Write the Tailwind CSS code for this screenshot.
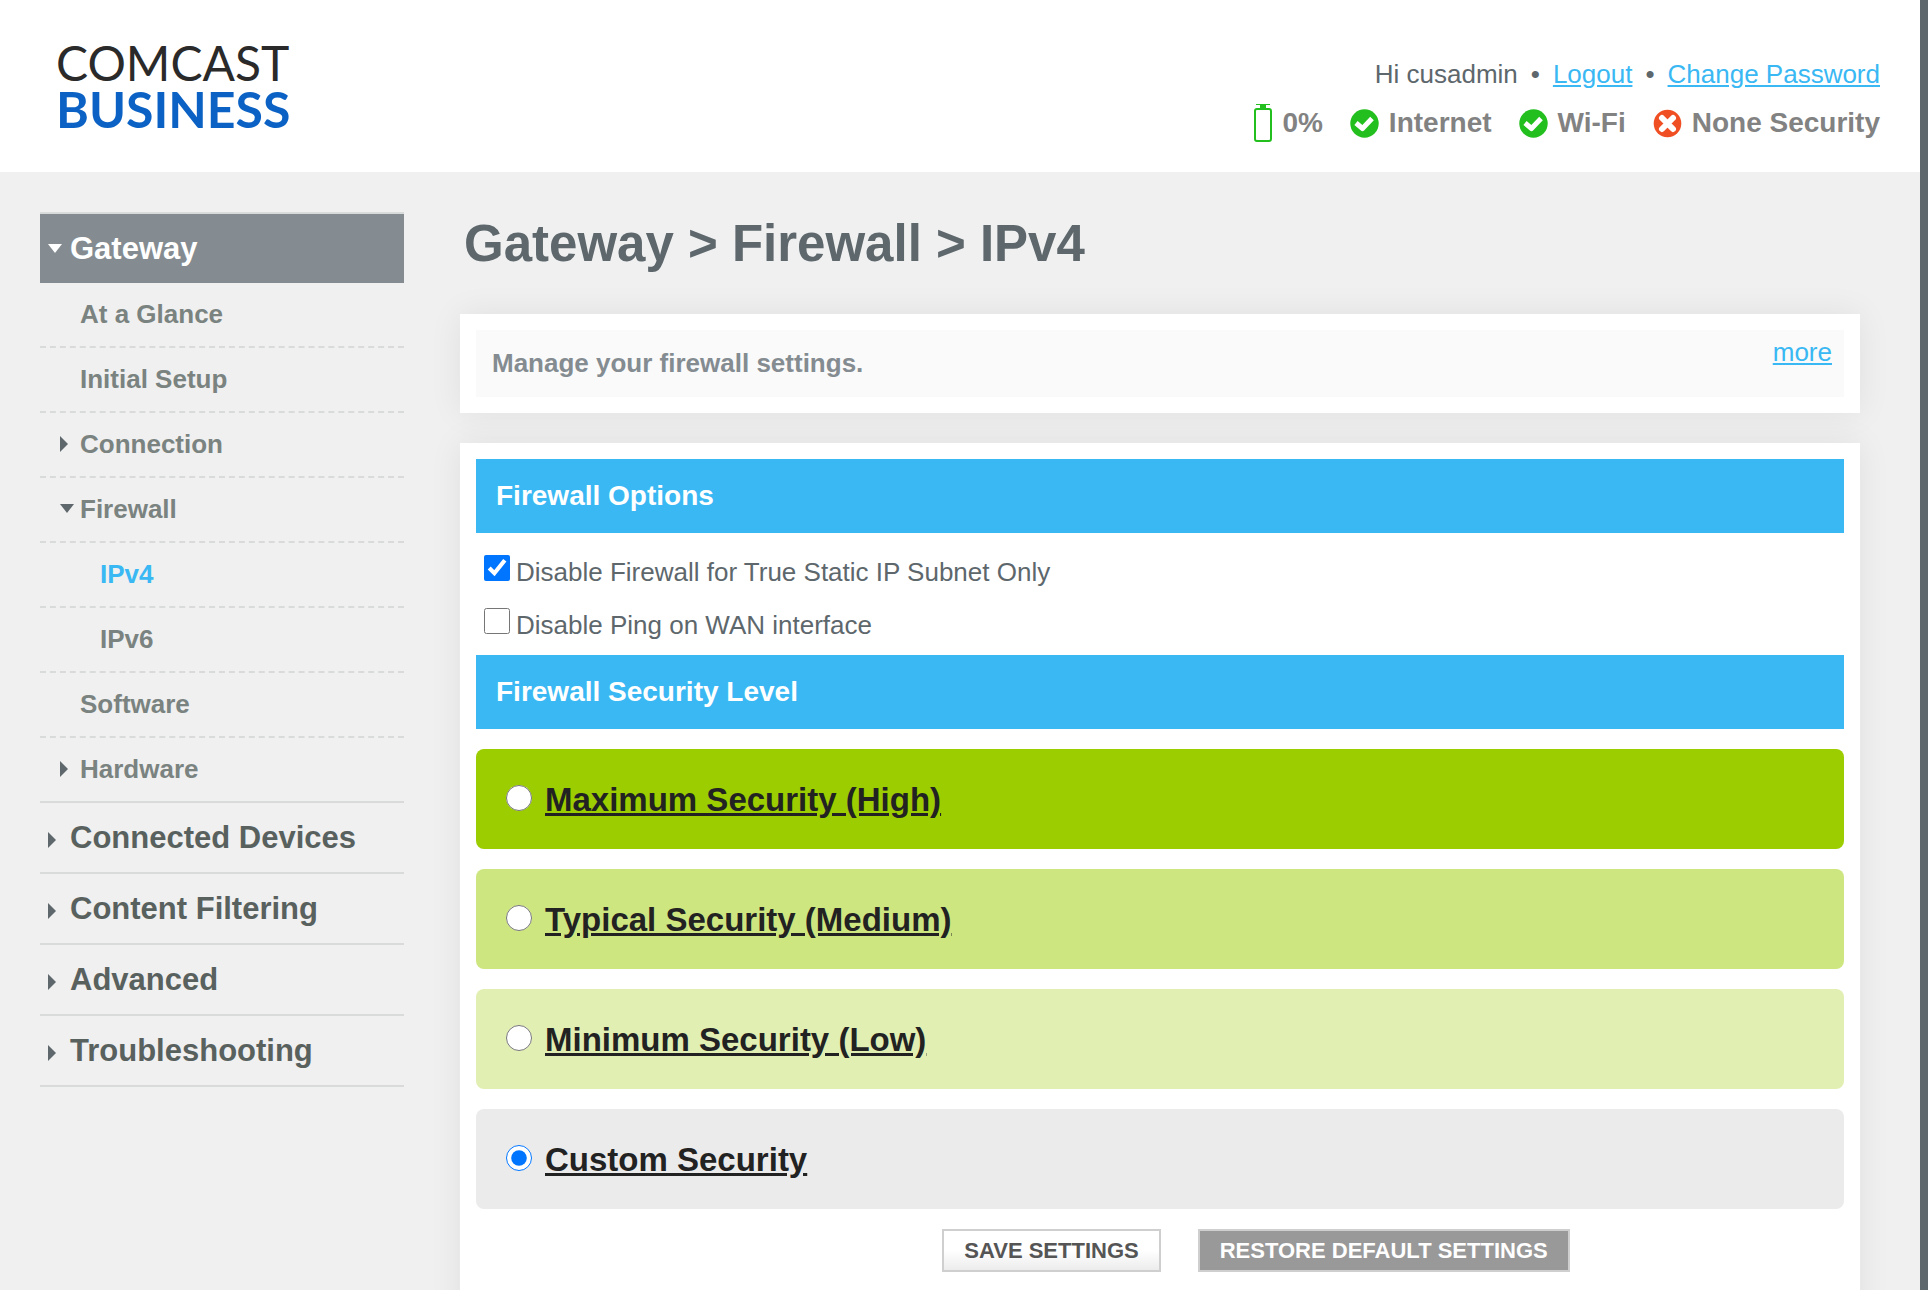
<!DOCTYPE html>
<html lang="en">
<head>
<meta charset="utf-8">
<title>Gateway &gt; Firewall &gt; IPv4</title>
<script src="https://cdn.jsdelivr.net/npm/@tailwindcss/browser@4"></script>
</head>
<body class="bg-[#5d676c] pr-2 font-['Liberation_Sans',Arial,sans-serif] text-[26px] leading-[30px] text-[#5d676c]">
<div class="min-h-screen bg-[#f0f0f0]">

  <header class="flex h-[172px] items-start justify-between bg-white pl-14 pr-10">
    <a href="#" aria-label="Comcast Business" class="flex flex-col pt-[39px] font-['Lato',sans-serif]">
      <span class="h-[47px] text-5xl leading-[47px] text-[#2a2a2a]">COMCAST</span>
      <span class="h-[47px] text-[50px] font-bold leading-[47px] text-[#0c62c4]">BUSINESS</span>
    </a>
    <div class="flex flex-col items-end gap-[18px] pt-[59px]">
      <div class="flex gap-[13px]">
        <span>Hi cusadmin</span><span>•</span>
        <a href="#" class="text-[#39b8f3] underline">Logout</a><span>•</span>
        <a href="#" class="text-[#39b8f3] underline">Change Password</a>
      </div>
      <ul class="flex items-center gap-[27px] text-[28px] font-bold leading-8 text-[#828282]">
        <li class="flex items-center gap-[10px]">
          <svg class="-my-1 h-[38px] w-[18px]" viewBox="0 0 18 38" fill="none"><path d="M2 0h14v1h-4v4H6V1H2z" fill="#23bf1f"/><rect x="1" y="5" width="16" height="32" rx="2" stroke="#23bf1f" stroke-width="2"/></svg>
          0%
        </li>
        <li class="flex items-center gap-[10px]">
          <svg class="size-[29px]" viewBox="0 0 29 29" fill="none"><circle cx="14.500" cy="14.500" r="14.200" fill="#23bf1f"/><path d="M6 14l6.500 5.500L22 9.500" stroke="#fff" stroke-width="5" stroke-linejoin="round"/></svg>
          Internet
        </li>
        <li class="flex items-center gap-[10px]">
          <svg class="size-[29px]" viewBox="0 0 29 29" fill="none"><circle cx="14.500" cy="14.500" r="14.200" fill="#23bf1f"/><path d="M6 14l6.500 5.500L22 9.500" stroke="#fff" stroke-width="5" stroke-linejoin="round"/></svg>
          Wi-Fi
        </li>
        <li class="flex items-center gap-[10px]">
          <svg class="size-[29px]" viewBox="0 0 29 29" fill="none"><circle cx="14.500" cy="14.500" r="13.800" fill="#f04e23"/><path d="M9 9l11 11M20 9L9 20" stroke="#fff" stroke-width="6" stroke-linecap="round"/></svg>
          None Security
        </li>
      </ul>
    </div>
  </header>

  <div class="flex items-start gap-14 pl-10 pr-[60px] pt-10">
    <nav class="w-[364px] shrink-0 border-t-2 border-[#d9dada] font-bold text-[#7a8380]">
      <a href="#" class="flex h-[69px] items-center gap-2 bg-[#848c91] pl-2 text-[31px] text-white">
        <svg class="h-[9px] w-[14px]" viewBox="0 0 14 9"><path d="M0 0h14L7 9z" fill="currentColor"/></svg>Gateway</a>
      <a href="#" class="flex h-[65px] items-center border-b-2 border-dashed border-[#d9dada] pb-0.5 pl-10">At a Glance</a>
      <a href="#" class="flex h-[65px] items-center border-b-2 border-dashed border-[#d9dada] pb-0.5 pl-10">Initial Setup</a>
      <a href="#" class="flex h-[65px] items-center gap-3 border-b-2 border-dashed border-[#d9dada] pb-0.5 pl-5">
        <svg class="h-4 w-2" viewBox="0 0 8 16"><path d="M0 0v16l8-8z" fill="#5d676c"/></svg>Connection</a>
      <a href="#" class="flex h-[65px] items-center gap-[6px] border-b-2 border-dashed border-[#d9dada] pb-0.5 pl-5">
        <svg class="h-[9px] w-[14px]" viewBox="0 0 14 9"><path d="M0 0h14L7 9z" fill="#5d676c"/></svg>Firewall</a>
      <a href="#" aria-current="page" class="flex h-[65px] items-center border-b-2 border-dashed border-[#d9dada] pb-0.5 pl-[60px] text-[#39b8f3]">IPv4</a>
      <a href="#" class="flex h-[65px] items-center border-b-2 border-dashed border-[#d9dada] pb-0.5 pl-[60px]">IPv6</a>
      <a href="#" class="flex h-[65px] items-center border-b-2 border-dashed border-[#d9dada] pb-0.5 pl-10">Software</a>
      <a href="#" class="flex h-[65px] items-center gap-3 border-b-2 border-[#d9dada] pb-0.5 pl-5">
        <svg class="h-4 w-2" viewBox="0 0 8 16"><path d="M0 0v16l8-8z" fill="#5d676c"/></svg>Hardware</a>
      <a href="#" class="flex h-[71px] items-center gap-[14px] border-b-2 border-[#d9dada] pl-2 text-[31px] text-[#59615f]">
        <svg class="mt-1 h-4 w-2" viewBox="0 0 8 16"><path d="M0 0v16l8-8z" fill="#5d676c"/></svg>Connected Devices</a>
      <a href="#" class="flex h-[71px] items-center gap-[14px] border-b-2 border-[#d9dada] pl-2 text-[31px] text-[#59615f]">
        <svg class="mt-1 h-4 w-2" viewBox="0 0 8 16"><path d="M0 0v16l8-8z" fill="#5d676c"/></svg>Content Filtering</a>
      <a href="#" class="flex h-[71px] items-center gap-[14px] border-b-2 border-[#d9dada] pl-2 text-[31px] text-[#59615f]">
        <svg class="mt-1 h-4 w-2" viewBox="0 0 8 16"><path d="M0 0v16l8-8z" fill="#5d676c"/></svg>Advanced</a>
      <a href="#" class="flex h-[71px] items-center gap-[14px] border-b-2 border-[#d9dada] pl-2 text-[31px] text-[#59615f]">
        <svg class="mt-1 h-4 w-2" viewBox="0 0 8 16"><path d="M0 0v16l8-8z" fill="#5d676c"/></svg>Troubleshooting</a>
    </nav>

    <main class="min-w-0 flex-1">
      <h1 class="h-[102px] pl-1 text-[51px] font-bold leading-[64px]">Gateway &gt; Firewall &gt; IPv4</h1>

      <section class="bg-white p-4 shadow-[0_0_32px_rgba(0,0,0,0.07)]">
        <div class="flex h-[67px] items-start justify-between bg-[#fafafa] pl-4 pr-3">
          <p class="pt-[18px] font-bold text-[#848c91]">Manage your firewall settings.</p>
          <a href="#" class="pt-[7px] text-[#39b8f3] underline">more</a>
        </div>
      </section>

      <form class="mt-[30px] bg-white p-4 shadow-[0_0_32px_rgba(0,0,0,0.07)]">
        <h2 class="bg-[#39b8f3] px-5 py-5 text-[28px] font-bold leading-[34px] text-white">Firewall Options</h2>
        <div class="flex flex-col gap-[23px] pb-[15px] pl-2 pt-6">
          <label class="flex h-[30px] gap-[6px]"><input type="checkbox" checked class="-mt-0.5 size-[26px]"><span>Disable Firewall for True Static IP Subnet Only</span></label>
          <label class="flex h-[30px] gap-[6px]"><input type="checkbox" class="-mt-0.5 size-[26px]"><span>Disable Ping on WAN interface</span></label>
        </div>
        <h2 class="bg-[#39b8f3] px-5 py-5 text-[28px] font-bold leading-[34px] text-white">Firewall Security Level</h2>
        <div class="flex flex-col gap-5 pt-5 text-[33px] font-bold leading-[38px] text-[#222] underline">
          <label class="flex h-[100px] items-center gap-[13px] rounded-lg bg-[#9ccd00] pl-[30px] pt-0.5"><input type="radio" name="level" class="-mt-1 size-[26px]">Maximum Security (High)</label>
          <label class="flex h-[100px] items-center gap-[13px] rounded-lg bg-[#cee680] pl-[30px] pt-0.5"><input type="radio" name="level" class="-mt-1 size-[26px]">Typical Security (Medium)</label>
          <label class="flex h-[100px] items-center gap-[13px] rounded-lg bg-[#e1efb3] pl-[30px] pt-0.5"><input type="radio" name="level" class="-mt-1 size-[26px]">Minimum Security (Low)</label>
          <label class="flex h-[100px] items-center gap-[13px] rounded-lg bg-[#ebebeb] pl-[30px] pt-0.5"><input type="radio" name="level" checked class="-mt-1 size-[26px]">Custom Security</label>
        </div>
        <div class="flex justify-center gap-[37px] pb-10 pl-[192px] pt-5 text-[22px] font-bold leading-[39px]">
          <button type="button" class="border-2 border-[#cfcfcf] bg-linear-to-b from-white from-50% to-[#ececec] px-5 text-[#555]">SAVE SETTINGS</button>
          <button type="button" class="border-2 border-[#cfcfcf] bg-[#999] px-5 text-white">RESTORE DEFAULT SETTINGS</button>
        </div>
      </form>
    </main>
  </div>
</div>
</body>
</html>
